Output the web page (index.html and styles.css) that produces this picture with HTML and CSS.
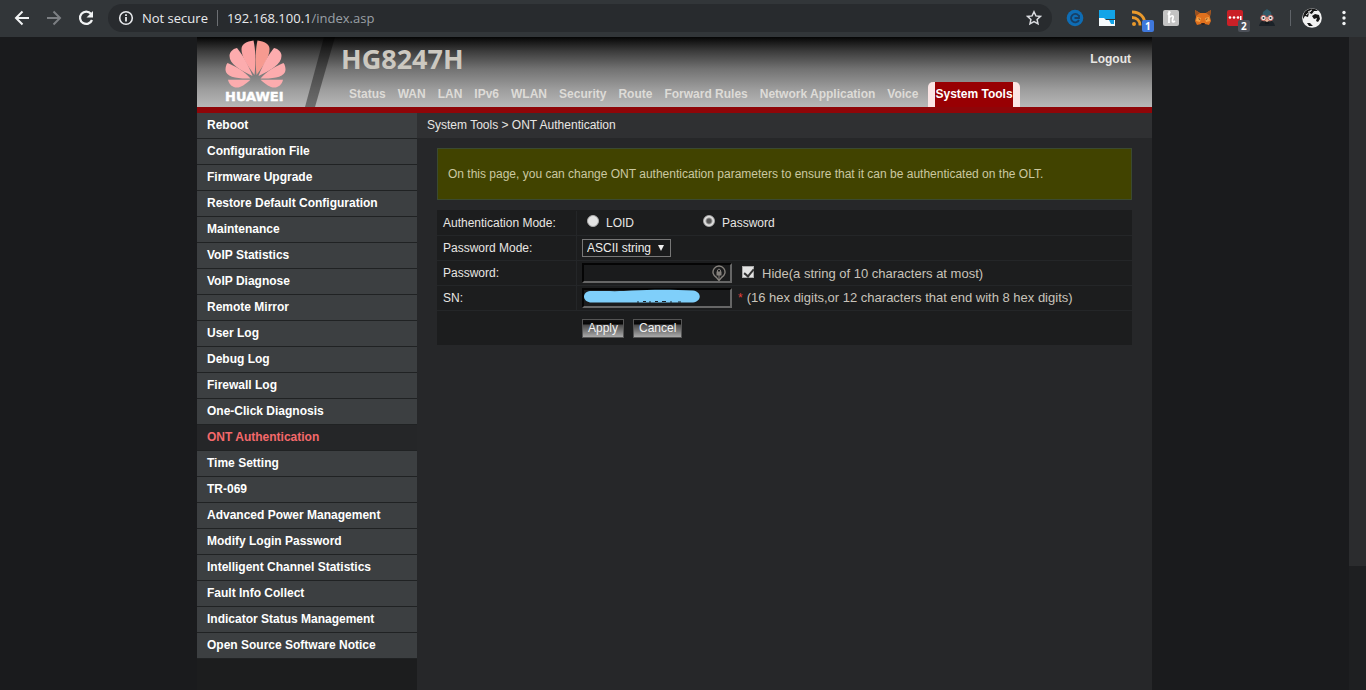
FILE: index.html
```html
<!DOCTYPE html>
<html lang="en">
<head>
<meta charset="utf-8">
<title>HG8247H</title>
<link rel="stylesheet" href="styles.css">
</head>
<body>
<div class="browser">
  <button class="tool" aria-label="Back"><svg width="16" height="16" viewBox="0 0 16 16" fill="none" stroke="#f1f3f4" stroke-width="2"><path d="M15 8H2.5M8.500 1.500L2 8l6.500 6.500"/></svg></button>
  <button class="tool" aria-label="Forward"><svg width="16" height="16" viewBox="0 0 16 16" fill="none" stroke="#7c7f83" stroke-width="2"><path d="M1 8h12.500M7.500 1.500L14 8l-6.500 6.500"/></svg></button>
  <button class="tool" aria-label="Reload"><svg width="16" height="16" viewBox="0 0 16 16"><path d="M13 3.800A6.200 6.200 0 1 0 14 10" fill="none" stroke="#f1f3f4" stroke-width="2.200"/><path d="M15 1v6.500H8.500z" fill="#f1f3f4"/></svg></button>
  <div class="address">
    <svg width="16" height="16" viewBox="0 0 16 16"><circle cx="8" cy="8" r="6.300" fill="none" stroke="#e8eaed" stroke-width="1.600"/><path d="M8 7v4.500M8 4.300v1.700" stroke="#e8eaed" stroke-width="1.800"/></svg>
    <span class="secure">Not secure</span>
    <span class="url">192.168.100.1<span class="path">/index.asp</span></span>
    <button class="star" aria-label="Bookmark"><svg width="16" height="16" viewBox="0 0 16 16"><path d="M8 1.800l1.900 4.100 4.500.5-3.300 3 .9 4.400L8 11.600l-4 2.200.9-4.400-3.300-3 4.500-.5z" fill="none" stroke="#dadce0" stroke-width="1.500"/></svg></button>
  </div>
  <div class="extensions">
    <svg width="18" height="20" viewBox="0 0 18 20"><circle cx="9" cy="10" r="8.300" fill="#0e6db5"/><path d="M12.500 7.500A4.200 4.200 0 1 0 13 12M8.500 10h4.500V7" fill="none" stroke="#173f66" stroke-width="1.800"/></svg>
    <svg width="18" height="20" viewBox="0 0 18 20"><path fill="#12a4e8" d="M1 2h16v9H1z"/><path fill="#f5fafc" d="M1 10h5l2 2h9v6H1z"/><path fill="#12a4e8" d="M11 12h5v4h-3z"/></svg>
    <svg width="24" height="24" viewBox="0 0 24 24"><g fill="none" stroke="#e9992c" stroke-width="2.800"><path d="M2 4c8 0 13 5 13 13M2 9.500c5 0 8 3 8 8"/></g><circle cx="4" cy="16" r="2" fill="#e9992c"/><rect x="12" y="12" width="12" height="12" rx="2" fill="#3f78dc"/><text x="15" y="22" class="badge-text">1</text></svg>
    <svg width="18" height="20" viewBox="0 0 18 20"><rect x="1" y="2" width="16" height="16" rx="2" fill="#c3c3c3"/><path d="M7 4v11M5.500 6c3 0 3-3 1-2M7 10c2-3 5-3 4 0-1 3-1 5 2 3" fill="none" stroke="#fff" stroke-width="1.700"/></svg>
    <svg width="18" height="20" viewBox="0 0 18 20"><path fill="#df701d" d="M1 2l5 3h6l5-3-1 7 1 4-2 4-4-1H7l-4 1-2-4 1-4z"/><path fill="#9b5020" d="M1 2l5 3-4 3zM17 2l-5 3 4 3z"/><path fill="#f6a145" d="M3 9l4 1-1 4-4-1zM15 9l-4 1 1 4 4-1z"/><path fill="#33221c" d="M4.500 10l2 1.500H5zM13.500 10l-2 1.500H13zM7 15h4l-1 2H8z"/></svg>
    <svg width="24" height="24" viewBox="0 0 24 24"><rect x="1" y="2" width="16" height="16" rx="2" fill="#ca2027"/><g fill="#fff"><circle cx="4" cy="9.500" r="1.300"/><circle cx="8" cy="9.500" r="1.300"/><circle cx="12" cy="9.500" r="1.300"/><path d="M14 8h1.500v4H14z"/></g><rect x="12" y="12" width="12" height="12" rx="2" fill="#4c5058"/><text x="15" y="22" class="badge-text">2</text></svg>
    <svg width="18" height="20" viewBox="0 0 18 20"><path fill="#315a68" d="M9 1l4 3 1 5H4l1-5z"/><path fill="#1b2228" d="M1 18c1-4 3-6 8-6s7 2 8 6z"/><path fill="#e9b99e" d="M5 9h8l-2 5H7z"/><g fill="#e8f1f2" stroke="#bd5950"><circle cx="5.500" cy="10" r="2.700"/><circle cx="12.500" cy="10" r="2.700"/></g><g fill="#263238"><circle cx="5.500" cy="10" r="1"/><circle cx="12.500" cy="10" r="1"/></g><path fill="#12191d" d="M7 13l2 1 2-1v3H7z"/></svg>
    <span class="divider"></span>
    <svg width="20" height="20" viewBox="0 0 20 20"><circle cx="10" cy="10" r="9.800" fill="#f2f2f2"/><path fill="#161616" d="M2 5C5 0 12-1 16 3l-4 0-2 3-3-1-1 4-3-1-2 3c0-2 0-4 1-6zM10 8l3-2 4 1 1 4-2 3-2-1 1-3-3 1zM5 15l3 0 3 3-4 0z"/><path d="M4 7l5-4M8 8l5-4M6 4l4-2" stroke="#ddd"/></svg>
    <svg width="16" height="20" viewBox="0 0 16 20" fill="#f1f3f4"><circle cx="8" cy="4.500" r="1.700"/><circle cx="8" cy="10" r="1.700"/><circle cx="8" cy="15.500" r="1.700"/></svg>
  </div>
</div>
<div class="viewport">
  <div class="canvas">
    <div class="page">
      <header class="header">
        <svg class="logo" width="144" height="70" viewBox="0 0 144 70">
          <path d="M127 0h11l-20 70h-10z" fill="#000" fill-opacity=".4"/>
          <g fill="#fcacae">
            <path d="M57.500 38C49 27 44.500 19 44.500 12c0-5 5-7.500 12-8.500 2 9 2.500 20 1 34.500z" fill="#fca3a3"/>
            <path d="M55.500 39C43 33 32.500 27 32.500 19c0-4 3-7 7.500-8 5 6 11 16 15.500 28z"/>
            <path d="M53.500 41.500C40 42 29 40 28.500 33c0-3 .5-5 2-7C38 29 47 34 53.500 41.500z"/>
            <path d="M53.500 42.700C48 47.500 44 50.500 40 50.500c-4.500 0-8-3-9-7.800z"/>
          </g>
          <g transform="matrix(-1 0 0 1 117 0)" fill="#fcacae">
            <path d="M57.500 38C49 27 44.500 19 44.500 12c0-5 5-7.500 12-8.500 2 9 2.500 20 1 34.500z" fill="#f69a90"/>
            <path d="M55.500 39C43 33 32.500 27 32.500 19c0-4 3-7 7.500-8 5 6 11 16 15.500 28z"/>
            <path d="M53.500 41.500C40 42 29 40 28.500 33c0-3 .5-5 2-7C38 29 47 34 53.500 41.500z"/>
            <path d="M53.500 42.700C48 47.500 44 50.500 40 50.500c-4.500 0-8-3-9-7.800z"/>
          </g>
          <text x="28" y="64" class="logo-text">HUAWEI</text>
        </svg>
        <div class="header-main">
          <div class="title-row"><h1>HG8247H</h1><a class="logout" href="#">Logout</a></div>
          <nav class="tabs">
            <a href="#">Status</a><a href="#">WAN</a><a href="#">LAN</a><a href="#">IPv6</a><a href="#">WLAN</a><a href="#">Security</a><a href="#">Route</a><a href="#">Forward Rules</a><a href="#">Network Application</a><a href="#">Voice</a><a href="#" class="active">System Tools</a>
          </nav>
        </div>
      </header>
      <div class="body">
        <nav class="side">
          <a href="#">Reboot</a><a href="#">Configuration File</a><a href="#">Firmware Upgrade</a><a href="#">Restore Default Configuration</a><a href="#">Maintenance</a><a href="#">VoIP Statistics</a><a href="#">VoIP Diagnose</a><a href="#">Remote Mirror</a><a href="#">User Log</a><a href="#">Debug Log</a><a href="#">Firewall Log</a><a href="#">One-Click Diagnosis</a><a href="#" class="current">ONT Authentication</a><a href="#">Time Setting</a><a href="#">TR-069</a><a href="#">Advanced Power Management</a><a href="#">Modify Login Password</a><a href="#">Intelligent Channel Statistics</a><a href="#">Fault Info Collect</a><a href="#">Indicator Status Management</a><a href="#">Open Source Software Notice</a>
        </nav>
        <main class="main">
          <div class="crumbs">System Tools &gt; ONT Authentication</div>
          <div class="content">
            <p class="notice">On this page, you can change ONT authentication parameters to ensure that it can be authenticated on the OLT.</p>
            <form class="form">
              <div class="row"><span class="label">Authentication Mode:</span><div class="field modes">
                <label><input type="radio" name="mode"><span>LOID</span></label><label><input type="radio" name="mode" checked><span>Password</span></label></div></div>
              <div class="row"><label class="label" for="pmode">Password Mode:</label><div class="field"><select id="pmode"><option>ASCII string</option></select><svg class="arrow" width="6" height="6" viewBox="0 0 6 6"><path d="M0 0h6L3 6z" fill="#eee"/></svg></div></div>
              <div class="row"><label class="label" for="pwd">Password:</label><div class="field">
                <span class="box"><input class="text" type="password" id="pwd"><svg class="key" width="14" height="16" viewBox="0 0 14 16"><path d="M4.500 12.500A6 6 0 1 1 9.500 12.500L7 15.500z" fill="none" stroke="#85817c" stroke-width="1.400"/><rect x="4.500" y="6.500" width="5" height="4" fill="#85817c"/><path d="M5.500 7V5q1.500-2 3 0v2M7 10v5" fill="none" stroke="#85817c"/></svg></span>
                <label class="hide"><input type="checkbox" checked><span class="hint">Hide(a string of 10 characters at most)</span></label></div></div>
              <div class="row"><label class="label" for="sn">SN:</label><div class="field">
                <span class="box"><input class="text" type="text" id="sn"><svg class="redact" width="118" height="14" viewBox="0 0 118 14"><path d="M7 2C28 2 38 2.500 49 1.500c19-1 42-1 61 0 9 1 9 11 0 12H7C-1 12-1 3 7 2z" fill="#7fcffa"/><path d="M54 13h2M60 12.500h3M66 13h2M72 12.500h3M79 12.500h4M87 13h2M95 13h3" stroke="#182026"/></svg></span>
                <span class="sn-hint"><span class="star-mark">*</span><span class="hint">(16 hex digits,or 12 characters that end with 8 hex digits)</span></span></div></div>
              <div class="row actions"><span class="label"></span><div class="field"><button type="button">Apply</button><button type="button">Cancel</button></div></div>
            </form>
          </div>
        </main>
      </div>
    </div>
  </div>
  <div class="scrollbar"><div class="thumb"></div></div>
</div>
</body>
</html>
```
FILE: styles.css
```css
* { box-sizing: border-box; }
body { margin: 0; height: 100vh; overflow: hidden; display: flex; flex-direction: column; background: #1a1b1d; color: #e8e6e3; font: 12px/16px "Liberation Sans", Arial, sans-serif; }
a { color: inherit; text-decoration: none; }
svg { flex: none; }
button { font: inherit; cursor: pointer; }
.browser { display: flex; align-items: center; height: 37px; flex: none; background: #323639; padding: 0 14px 1px; font: 13px/20px "Open Sans", "Noto Sans", sans-serif; }
.tool, .star { display: flex; border: 0; padding: 0; background: none; }
.tool { margin-right: 16px; }
.tool:nth-of-type(3) { margin-right: 14px; }
.address { flex: 1; display: flex; align-items: center; height: 28px; border-radius: 14px; background: #282b2e; padding: 0 10px; color: #e8eaed; }
.secure { margin-left: 8px; padding-right: 9px; border-right: 1px solid #6c6f73; line-height: 16px; }
.url { margin-left: 9px; }
.path { color: #9aa0a6; }
.star { margin-left: auto; }
.extensions { display: flex; align-items: center; gap: 14px; margin-left: 14px; }
.extensions svg[width="24"] { margin: 4px -6px 0 0; }
.divider { width: 1px; height: 16px; margin-right: -3px; background: #5f6368; }
.badge-text { font: bold 10px "Open Sans", sans-serif; fill: #fff; }
.viewport { flex: 1; min-height: 0; display: flex; }
.canvas { flex: 1; min-width: 0; display: flex; justify-content: center; }
.scrollbar { width: 17px; flex: none; background: #1e1f21; }
.thumb { height: 81%; background: #2b2c2e; }
.page { width: 100%; max-width: 955px; display: flex; flex-direction: column; }
.header { display: flex; height: 76px; flex: none; border-bottom: 6px solid #8f0508; background: linear-gradient(#050505, #3b3b3b 14px, #727272 32px, #9c9c9c 52px, #b7b7b7); }
.logo-text { font: bold 13px "DejaVu Sans", sans-serif; fill: #fff; stroke: #fff; stroke-width: .4px; }
.header-main { flex: 1; display: flex; flex-direction: column; justify-content: space-between; }
.title-row { display: flex; justify-content: space-between; padding: 6px 21px 0 0; }
h1 { margin: 0; font: bold 27px/32px "Noto Sans", "Open Sans", sans-serif; color: #ccc8c0; }
.logout { font-weight: bold; padding-top: 8px; }
.tabs { display: flex; padding-left: 8px; gap: 12px; font-weight: bold; line-height: 25px; color: #dddbd7; white-space: nowrap; }
.tabs .active { margin-left: -2px; border: solid #fbe5e5; border-width: 0 7px; border-radius: 5px 5px 0 0; background: #980003; color: #fff; }
.body { flex: 1; display: flex; min-height: 0; }
.side { width: 220px; flex: none; background: #1c1d1e; color: #fff; font-weight: bold; }
.side a { display: block; padding: 4px 10px 5px; border-bottom: 1px solid #202223; background: #3c3f41; }
.side .current { background: #252628; color: #f4696b; }
.main { flex: 1; background: #262729; }
.crumbs { background: #2f3032; padding: 4px 10px 5px; }
.content { padding: 10px 20px; }
.notice { margin: 0; padding: 17px 10px; border: 1px solid #3b4a30; background: #414300; color: #cbc8a0; }
.form { margin-top: 10px; padding-top: 1px; background: #1c1d1e; }
.row { display: flex; height: 25px; border-bottom: 1px solid #242628; }
.label { width: 140px; flex: none; padding: 4px 6px; border-right: 1px solid #242628; }
.field { flex: 1; display: flex; align-items: center; padding-left: 5px; position: relative; }
.modes label { display: flex; align-items: center; width: 116px; }
input[type="radio"], input[type="checkbox"] { appearance: none; width: 12px; height: 12px; margin: 0; flex: none; background: #e3e3e3; border: 1px solid #aaa; }
input[type="radio"] { margin: 0 7px 5px 5px; border-radius: 50%; }
input[type="radio"]:checked { background: radial-gradient(circle, #555 2px, #e3e3e3 4px); }
input[type="checkbox"] { position: relative; margin-bottom: 3px; }
input[type="checkbox"]::after { content: ""; position: absolute; left: 3px; top: 0; width: 4px; height: 8px; border: solid #333; border-width: 0 2px 2px 0; transform: rotate(40deg); }
select { appearance: none; width: 89px; height: 18px; padding: 0 4px; border: 1px solid #777; background: #1a1b1c; color: #f0eeeb; font: inherit; line-height: 16px; }
.arrow { position: absolute; left: 81px; top: 9px; }
.box { position: relative; display: flex; }
.text { width: 150px; height: 20px; border: 2px solid; border-color: #050505 #666 #666 #050505; background: #1a1b1c; color: #eee; }
.key { position: absolute; right: 6px; top: 2px; }
.redact { position: absolute; left: 1px; top: 1px; }
.hide { display: flex; align-items: center; gap: 8px; margin-left: 10px; }
.hint { font-size: 13px; color: #c8c3ba; }
.hide .hint { padding-top: 2px; }
.sn-hint { display: flex; gap: 4px; margin-left: 6px; }
.star-mark { color: #e0403c; }
.actions { height: 34px; border-bottom: 0; }
.actions .label { border-right: 0; }
.actions .field { gap: 9px; }
.actions button { height: 19px; padding: 0 5px; border: 1px solid #555; background: linear-gradient(#101010, #050505 4px, #4a4a4a 5px, #aaa); color: #f3f3f3; line-height: 17px; }
```
